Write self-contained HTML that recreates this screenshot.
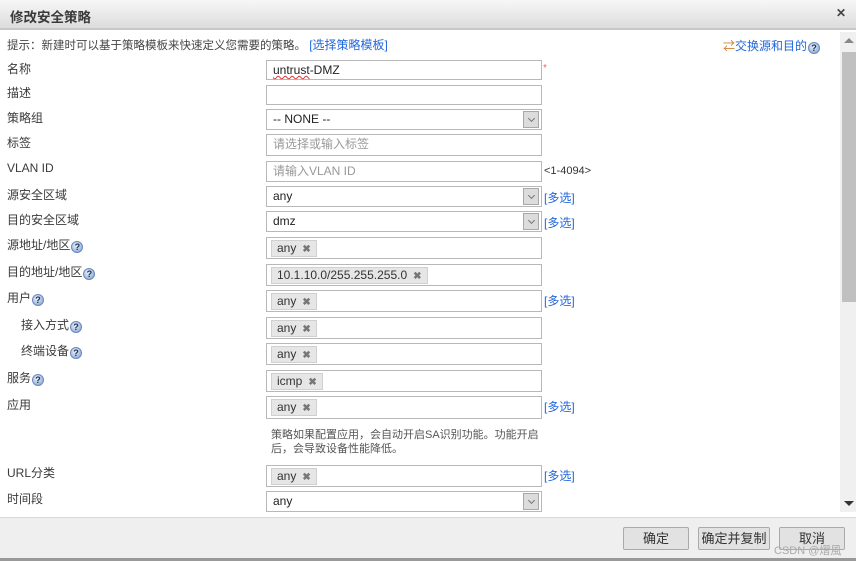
<!DOCTYPE html>
<html><head><meta charset="utf-8"><style>
*{box-sizing:border-box;margin:0;padding:0}
body{width:856px;height:564px;overflow:hidden;background:#fff;font-family:"Liberation Sans","Noto Sans CJK SC",sans-serif;font-size:12px;color:#333;position:relative}
.abs{position:absolute;white-space:nowrap}
.title{left:0;top:0;width:856px;height:30px;background:linear-gradient(#f7f7f7,#dcdcdc);border-bottom:2px solid #c8c8c8}
.title span{position:absolute;left:10px;top:6px;font-size:13.5px;font-weight:bold;color:#3a3a3a}
.close{position:absolute;right:10px;top:6px;font-size:12px;font-weight:bold;color:#444}
.lbl{left:7px;font-size:12px;color:#3a3a3a}
.in{left:266px;width:276px;border:1px solid #b8b8b8;background:#fff;height:21px;padding-left:6px;font-size:12px;line-height:19px;color:#222}
.ph{color:#999}
.dd{position:absolute;right:2px;top:1px;width:16px;height:17px;border:1px solid #a8a8a8;background:#dcdcdc}
.dd:after{content:"";position:absolute;left:5px;top:4px;width:4px;height:4px;border-right:1px solid #777;border-bottom:1px solid #777;transform:rotate(45deg)}
.tag{position:absolute;left:4px;top:2px;height:17px;background:#e6e6e6;border:1px solid #d0d0d0;padding:0 5px;line-height:15px;font-size:12px;color:#333}
.tag b{color:#777;margin-left:6px;font-size:10px}
.link{color:#2266dd;font-size:12px}
.q{display:inline-block;width:12px;height:12px;border-radius:50%;background:radial-gradient(circle at 40% 35%,#e8f0ff,#7a9cd0);border:1px solid #6a88bb;color:#234;font-size:9px;line-height:10px;text-align:center;font-weight:bold;vertical-align:-1px;margin-left:1px}
</style></head><body>
<div class="abs title"><span>修改安全策略</span><div class="close">✕</div></div>

<div class="abs" style="left:7px;top:36px;font-size:11.5px;color:#444">提示：新建时可以基于策略模板来快速定义您需要的策略。 <span class="link">[选择策略模板]</span></div>
<div class="abs" style="left:723px;top:37px"><span style="color:#d08030">⇄</span><span class="link">交换源和目的</span><span class="q">?</span></div>

<div class="abs" style="left:840px;top:32px;width:16px;height:480px;background:#f0f0f0"></div>
<div class="abs" style="left:842px;top:52px;width:14px;height:250px;background:#c0c0c0"></div>
<div class="abs" style="left:844px;top:38px;width:0;height:0;border-left:5px solid transparent;border-right:5px solid transparent;border-bottom:5px solid #888"></div>
<div class="abs" style="left:844px;top:501px;width:0;height:0;border-left:5px solid transparent;border-right:5px solid transparent;border-top:5px solid #333"></div>

<div class="abs lbl" style="top:60px">名称</div>
<div class="abs in" style="top:60px;height:20px"><span style="text-decoration:underline wavy #d33;text-decoration-thickness:1px">untrust</span>-DMZ</div>
<div class="abs" style="left:543px;top:63px;color:#e66;font-size:10px">*</div>

<div class="abs lbl" style="top:84px">描述</div>
<div class="abs in" style="top:85px;height:20px"></div>

<div class="abs lbl" style="top:109px">策略组</div>
<div class="abs in" style="top:109px">-- NONE --<div class="dd"></div></div>

<div class="abs lbl" style="top:134px">标签</div>
<div class="abs in ph" style="top:134px;height:22px">请选择或输入标签</div>

<div class="abs lbl" style="top:161px">VLAN ID</div>
<div class="abs in ph" style="top:161px">请输入VLAN ID</div>
<div class="abs" style="left:544px;top:165px;font-size:11px">&lt;1-4094&gt;</div>

<div class="abs lbl" style="top:186px">源安全区域</div>
<div class="abs in" style="top:186px">any<div class="dd"></div></div>
<div class="abs link" style="left:544px;top:189px">[多选]</div>

<div class="abs lbl" style="top:211px">目的安全区域</div>
<div class="abs in" style="top:211px">dmz<div class="dd"></div></div>
<div class="abs link" style="left:544px;top:214px">[多选]</div>

<div class="abs lbl" style="top:236px">源地址/地区<span class="q">?</span></div>
<div class="abs in" style="top:237px;height:22px"><div class="tag">any<b>✖</b></div></div>

<div class="abs lbl" style="top:263px">目的地址/地区<span class="q">?</span></div>
<div class="abs in" style="top:264px;height:22px"><div class="tag">10.1.10.0/255.255.255.0<b>✖</b></div></div>

<div class="abs lbl" style="top:289px">用户<span class="q">?</span></div>
<div class="abs in" style="top:290px;height:22px"><div class="tag">any<b>✖</b></div></div>
<div class="abs link" style="left:544px;top:292px">[多选]</div>

<div class="abs lbl" style="top:316px;left:21px">接入方式<span class="q">?</span></div>
<div class="abs in" style="top:317px;height:22px"><div class="tag">any<b>✖</b></div></div>

<div class="abs lbl" style="top:342px;left:21px">终端设备<span class="q">?</span></div>
<div class="abs in" style="top:343px;height:22px"><div class="tag">any<b>✖</b></div></div>

<div class="abs lbl" style="top:369px">服务<span class="q">?</span></div>
<div class="abs in" style="top:370px;height:22px"><div class="tag">icmp<b>✖</b></div></div>

<div class="abs lbl" style="top:396px">应用</div>
<div class="abs in" style="top:396px;height:23px"><div class="tag">any<b>✖</b></div></div>
<div class="abs link" style="left:544px;top:398px">[多选]</div>
<div class="abs" style="left:271px;top:428px;font-size:11px;color:#555;line-height:14px;white-space:normal;width:280px">策略如果配置应用，会自动开启SA识别功能。功能开启后，会导致设备性能降低。</div>

<div class="abs lbl" style="top:464px">URL分类</div>
<div class="abs in" style="top:465px;height:22px"><div class="tag">any<b>✖</b></div></div>
<div class="abs link" style="left:544px;top:467px">[多选]</div>

<div class="abs lbl" style="top:490px">时间段</div>
<div class="abs in" style="top:491px">any<div class="dd"></div></div>

<div class="abs" style="left:0;top:517px;width:856px;height:41px;background:#efefef;border-top:1px solid #d8d8d8"></div>
<div class="abs" style="left:0;top:558px;width:856px;height:3px;background:#999"></div>
<div class="abs" style="left:623px;top:527px;width:66px;height:23px;border:1px solid #aaa;border-radius:2px;background:#e2e2e2;text-align:center;line-height:21px;font-size:13px">确定</div>
<div class="abs" style="left:698px;top:527px;width:72px;height:23px;border:1px solid #aaa;border-radius:2px;background:#e2e2e2;text-align:center;line-height:21px;font-size:13px">确定并复制</div>
<div class="abs" style="left:779px;top:527px;width:66px;height:23px;border:1px solid #aaa;border-radius:2px;background:#e2e2e2;text-align:center;line-height:21px;font-size:13px">取消</div>
<div class="abs" style="left:774px;top:542px;font-size:11px;color:#aaa">CSDN @熠風</div>
</body></html>
